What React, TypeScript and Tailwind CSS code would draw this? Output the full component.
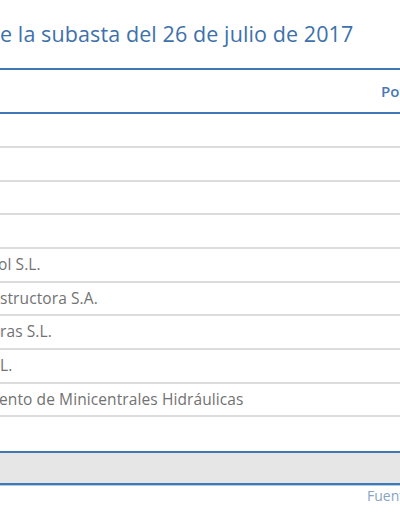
const rows: { name: string; h: string; shift: string }[] = [
  { name: "", h: "h-[34px]", shift: "" },
  { name: "", h: "h-[34px]", shift: "" },
  { name: "", h: "h-[33px]", shift: "" },
  { name: "", h: "h-[34px]", shift: "" },
  { name: "ol S.L.", h: "h-[34px]", shift: "-ml-[2px]" },
  { name: "structora S.A.", h: "h-[33px]", shift: "" },
  { name: "ras S.L.", h: "h-[34px]", shift: "" },
  { name: "L.", h: "h-[34px]", shift: "" },
  { name: "ento de Minicentrales Hidráulicas", h: "h-[33px]", shift: "-ml-[1px]" },
  { name: "", h: "h-[34px]", shift: "" },
];

export default function App() {
  return (
    <div className="w-[400px] h-[516px] bg-white overflow-hidden font-['Open_Sans',sans-serif]">
      <h2 className="h-[68px] pt-[19px] text-[21.5px] leading-[30px] tracking-[0.1px] text-[#3d71ac] whitespace-nowrap">
        e la subasta del 26 de julio de 2017
      </h2>

      <div className="border-t-2 border-[#3f78b3]">
        <div className="h-[44px] flex items-center justify-end border-b-2 border-[#3f78b3]">
          <span className="text-[15px] font-semibold text-[#4a7ab1] w-[19px] overflow-hidden whitespace-nowrap">
            Potencia
          </span>
        </div>

        {rows.map((row, i) => (
          <div
            key={i}
            className={`${row.h} flex items-center ${
              i < rows.length - 1 ? "border-b-2 border-[#dcdcdc]" : ""
            } overflow-hidden`}
          >
            <span className={`${row.shift} text-[15.5px] tracking-[0.1px] text-[#727272] whitespace-nowrap`}>
              {row.name}
            </span>
          </div>
        ))}

        <div className="h-[34px] bg-[#e6e6e6] border-t-2 border-b-2 border-[#3f78b3] shadow-[0_1px_0_#a9cdef]"></div>
      </div>

      <div className="flex justify-end">
        <span className="w-[33px] overflow-hidden whitespace-nowrap text-[14px] text-[#86a3c6]">
          Fuente: CNMC
        </span>
      </div>
    </div>
  );
}
